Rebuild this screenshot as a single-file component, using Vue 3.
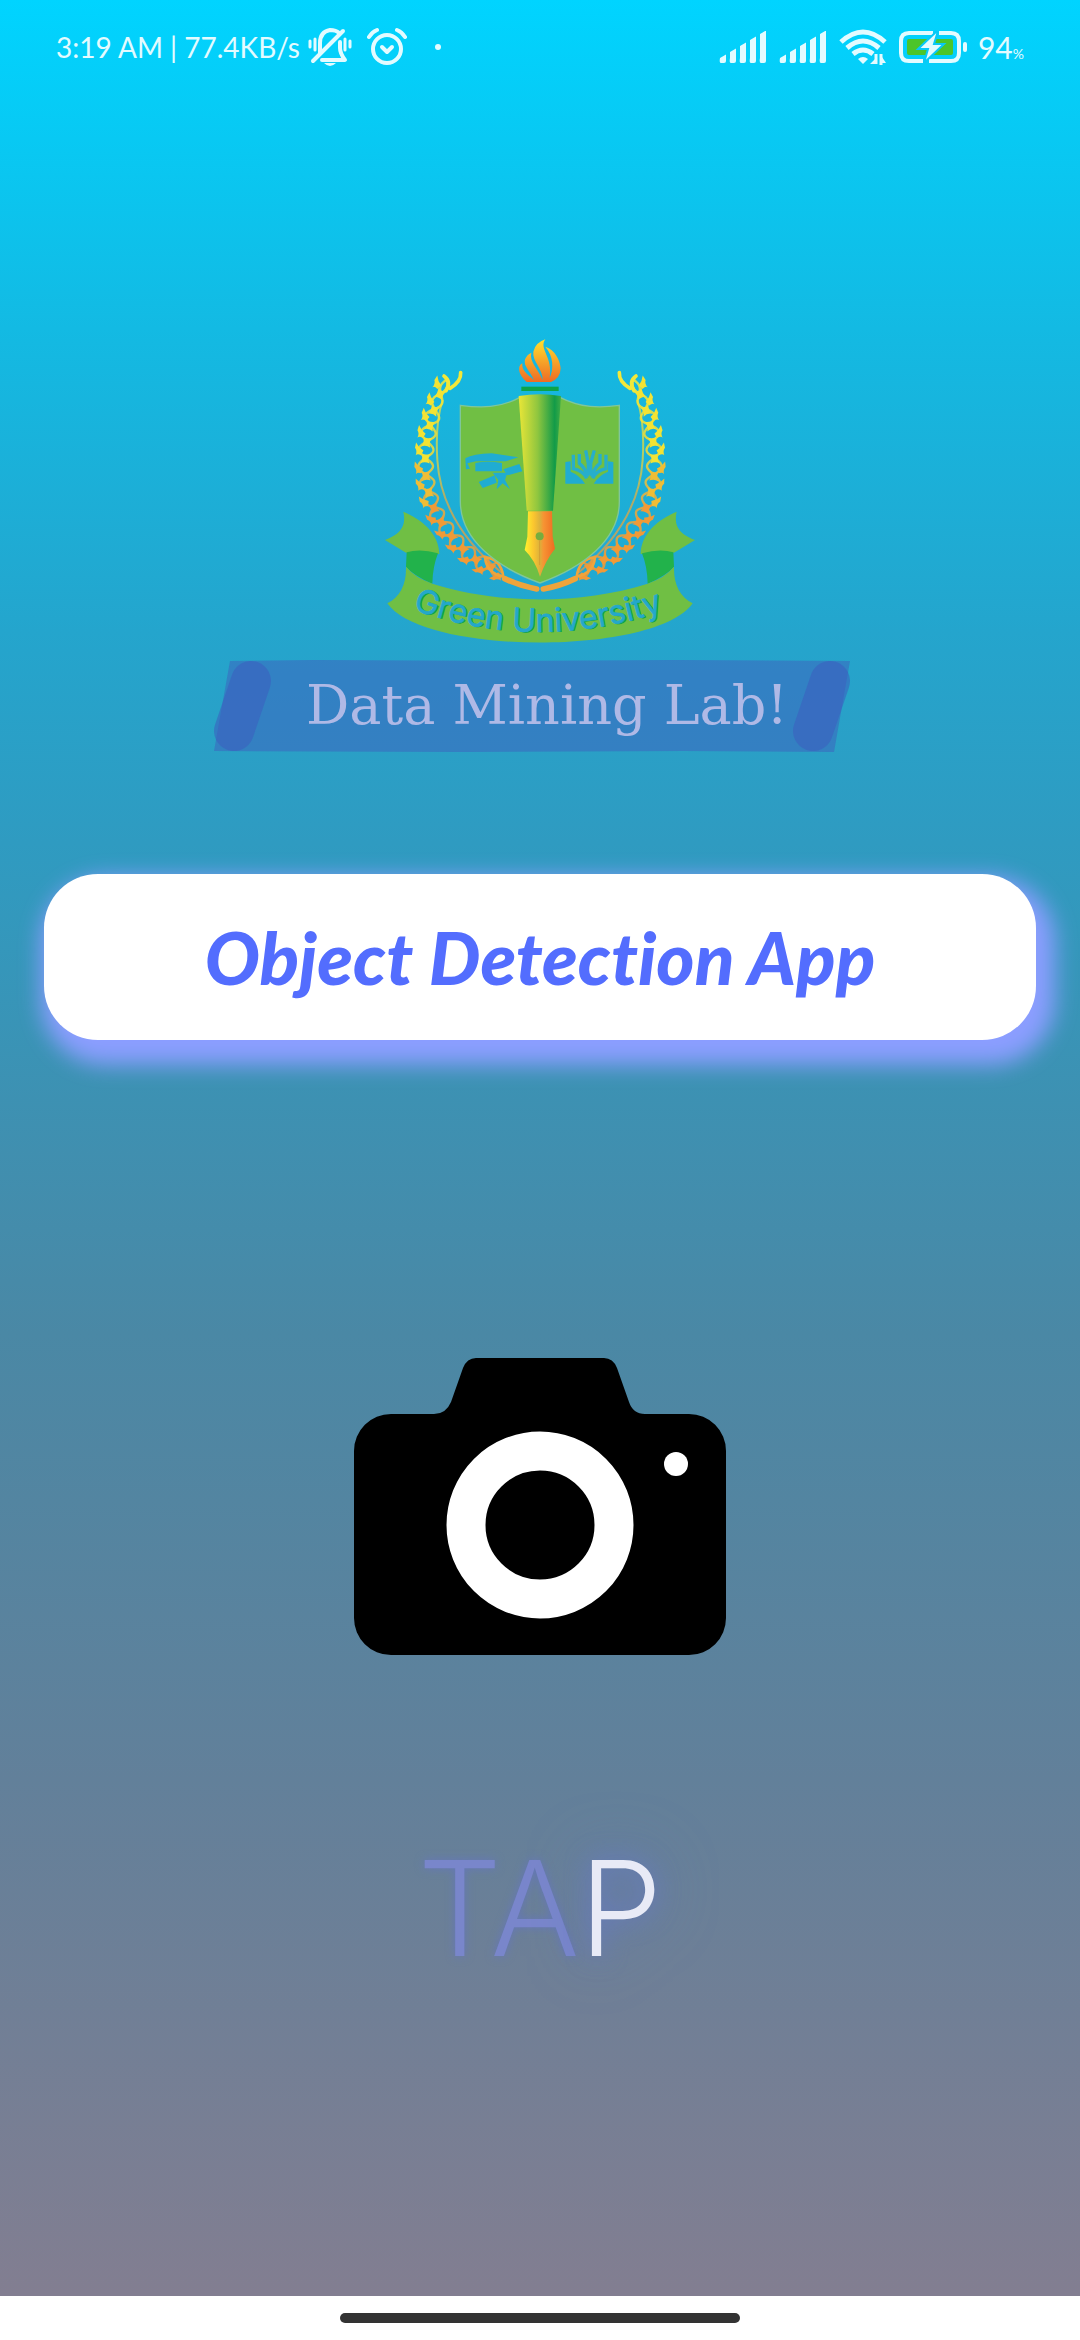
<script setup>
const bez = (p, t) => {
  const u = 1 - t
  return [0, 1].map(i => u * u * u * p[0][i] + 3 * u * u * t * p[1][i] + 3 * u * t * t * p[2][i] + t * t * t * p[3][i])
}
const stem = [
  [[234, 175], [150, 330], [140, 520], [232, 630]],
  [[232, 630], [275, 690], [325, 735], [390, 750]]
]
const points = []
stem.forEach(s => { for (let i = 0; i < 100; i++) points.push(bez(s, i / 100)) })

// Two strands twisted round the stem, with a leaf at each crossing and one at each outer bulge
let run = 0
const strandA = []
const strandB = []
const leaves = []
let last = 0
for (let i = 1; i < points.length - 1; i++) {
  const dx = points[i + 1][0] - points[i - 1][0]
  const dy = points[i + 1][1] - points[i - 1][1]
  const len = Math.hypot(dx, dy)
  run += len / 2
  const nx = -dy / len
  const ny = dx / len
  const w = Math.sin((run / 50) * Math.PI) * Math.min(22, 6 + run / 8)
  strandA.push(`${(points[i][0] + nx * w).toFixed(1)} ${(points[i][1] + ny * w).toFixed(1)}`)
  strandB.push(`${(points[i][0] - nx * w).toFixed(1)} ${(points[i][1] - ny * w).toFixed(1)}`)
  if (Math.floor(run / 25) > last) {
    last = Math.floor(run / 25)
    const angle = (Math.atan2(dy, dx) * 180) / Math.PI
    leaves.push({ x: points[i][0].toFixed(1), y: points[i][1].toFixed(1), angle: angle.toFixed(1), outer: last % 2 === 1 })
  }
}
const braid = `M${strandA.join('L')}M${strandB.join('L')}`
const leafColor = y => (y < 420 ? '#f3e334' : y < 560 ? '#efbd36' : '#f09a37')
const bars = [0, 1, 2, 3, 4]
</script>

<template>
  <div class="screen">
    <header class="status">
      <span class="clock">3:19 AM | 77.4KB/s</span>
      <svg class="bell" width="46" height="42" viewBox="0 0 46 42" fill="none" stroke="#e3fbff" stroke-width="4">
        <path d="M13 27V17C13 9 17 5 23 4C27 4 30 5 32 7" />
        <path d="M6 35L36 5" stroke-linecap="round" />
        <path d="M33 16V22C33 27 35 30 38 34H15" stroke-linejoin="round" stroke-linecap="round" />
        <path d="M17 37H29Q23 43 17 37Z" fill="#e3fbff" stroke="none" />
        <path d="M3 15V21M8 13V24M38 13V24M43 15V21" stroke-width="3" stroke-linecap="round" />
      </svg>
      <svg class="alarm" width="40" height="40" viewBox="0 0 40 40" fill="none" stroke="#e3fbff" stroke-linecap="round">
        <circle cx="20" cy="22" r="14" stroke-width="4" />
        <path d="M15 20L20 25L25 20" stroke-width="4" stroke-linejoin="round" />
        <path d="M2 10Q5 5 10 3M30 3Q35 5 38 10" stroke-width="4" />
      </svg>
      <i class="dot"></i>
      <div class="system">
        <svg v-for="n in 2" :key="n" width="48" height="32" viewBox="0 0 48 32" fill="#e3fbff">
          <path v-for="b in bars" :key="b" :d="`M${b * 10 + 1} ${27 - b * 6}L${b * 10 + 7} ${23.5 - b * 6}V30Q${b * 10 + 7} 32 ${b * 10 + 5} 32H${b * 10 + 2}Q${b * 10} 32 ${b * 10 + 1} 27Z`" />
        </svg>
        <svg class="wifi" width="48" height="36" viewBox="0 0 48 36" fill="none" stroke="#e3fbff" stroke-width="5">
          <path d="M2 13Q24 -7 46 13M8 19Q24 5 40 19M14 25Q24 17 34 25" />
          <path d="M19 30Q24 26 29 30L24 35Z" fill="#e3fbff" stroke="none" />
          <path d="M37 25V35M42 25V36" stroke-width="3" />
          <path d="M38 35H31L38 28ZM41 25V34H47Z" fill="#e3fbff" stroke="none" />
        </svg>
        <svg width="70" height="32" viewBox="0 0 70 32" fill="none">
          <rect x="8" y="8" width="46" height="16" rx="2" fill="#4cc52a" />
          <path d="M34 2H10Q2 2 2 10V22Q2 30 10 30H24M40 2H52Q60 2 60 10V22Q60 30 52 30H30" stroke="#e3fbff" stroke-width="4" />
          <path d="M38 0L19 18H29L25 32L45 13H35L39 0Z" fill="#e3fbff" stroke="#08c9f7" stroke-width="2" />
          <rect x="64" y="11" width="4" height="10" rx="2" fill="#e3fbff" />
        </svg>
        <span class="charge">94<small>%</small></span>
      </div>
    </header>

    <main class="content">
      <svg class="crest" viewBox="0 0 1020 1020" role="img" aria-label="Green University">
        <defs>
          <linearGradient id="flame" x2="0" y2="1"><stop offset="0" stop-color="#ffe12d" /><stop offset="1" stop-color="#ee6b24" /></linearGradient>
          <linearGradient id="barrel"><stop offset="0" stop-color="#eae637" /><stop offset=".45" stop-color="#8fc63f" /><stop offset=".85" stop-color="#129b48" /><stop offset="1" stop-color="#3fac46" /></linearGradient>
          <linearGradient id="nib"><stop offset="0" stop-color="#fff22d" /><stop offset=".3" stop-color="#fbc52f" /><stop offset=".5" stop-color="#dcb13b" /><stop offset=".62" stop-color="#f79433" /><stop offset="1" stop-color="#ee6b22" /></linearGradient>
          <linearGradient id="wheat" gradientUnits="userSpaceOnUse" x1="0" y1="160" x2="0" y2="780"><stop offset="0" stop-color="#f5ec36" /><stop offset=".4" stop-color="#f3da32" /><stop offset=".62" stop-color="#edaa3a" /><stop offset="1" stop-color="#f29536" /></linearGradient>
          <path id="motto" d="M128 868Q505 1004 900 866" />
          <g id="branch">
            <path :d="braid" fill="none" stroke="url(#wheat)" stroke-width="7" stroke-opacity=".85" />
            <g v-for="(leaf, i) in leaves" :key="i" :transform="`translate(${leaf.x} ${leaf.y}) rotate(${leaf.angle})`">
              <path v-if="leaf.outer" d="M-20 32Q-6 24 2 8L16 14Q12 26 18 30Q4 26 -4 34Z" :fill="leafColor(leaf.y)" />
              <path v-else d="M-18 14Q-6 8 -14 -14Q0 -4 16 -12Q8 2 16 16Q2 6 -18 14Z" :fill="leafColor(leaf.y)" />
            </g>
            <path d="M272 158Q274 185 240 205M222 168Q245 185 228 212" fill="none" stroke="#f3e838" stroke-width="11" stroke-linecap="round" />
            <path d="M218 240Q195 310 202 420Q214 610 395 758" fill="none" stroke="url(#wheat)" stroke-width="6" stroke-opacity=".7" />
            <path d="M345 712Q392 715 400 770Q350 760 345 712Z" fill="none" stroke="#efa43b" stroke-width="8" />
            <path d="M404 776Q450 798 500 807" fill="none" stroke="#efa43b" stroke-width="17" stroke-linecap="round" />
          </g>
        </defs>
        <use href="#branch" />
        <use href="#branch" transform="translate(1020 0) scale(-1 1)" />
        <path d="M271 256C335 265 390 264 450 232H570C632 264 690 264 748 256V545C748 660 640 742 510 789C380 742 272 660 271 545Z" fill="#70bf44" stroke="#7fc79a" stroke-width="4" />
        <path d="M446 228Q510 218 573 228L549 572H470Z" fill="url(#barrel)" />
        <path d="M474 574H546L548 650L555 686Q526 722 510 770Q495 720 464 690L472 650Z" fill="url(#nib)" />
        <circle cx="509" cy="649" r="12" fill="#76ad3e" />
        <path d="M509 661V735" stroke="#d59d32" stroke-width="3" />
        <rect x="454" y="200" width="112" height="13" fill="#0ca44b" />
        <path d="M470 186C440 160 445 135 457 130C455 150 468 160 492 180C478 150 460 140 465 118Q470 105 484 98C477 125 504 145 518 180C519 145 486 125 490 95Q496 68 526 58C505 87 550 110 539 174C552 145 550 108 526 80C555 90 570 120 572 145Q571 175 543 186Z" fill="url(#flame)" />
        <g fill="#20acd2">
          <path d="M286 415Q310 402 365 400L445 412L407 424H318L292 430L300 446L288 448Z" />
          <path d="M316 429Q352 421 396 429V454H316ZM400 448L448 432L457 454L412 466ZM326 486L374 466L380 488L338 504ZM368 458H412L405 480L420 508L398 490L380 508L385 480Z" />
          <path d="M586 426L602 424V455Q628 465 645 491H586ZM730 426L714 424V455Q688 465 671 491H730Z" />
        </g>
        <path d="M610 404V446Q640 453 650 475M628 402V430Q645 443 653 470M647 391L655 430V466M708 404V446Q678 453 668 475M690 402V430Q673 443 665 470M673 391L662 430V466" fill="none" stroke="#27aecb" stroke-width="10" />
        <g id="ribbon-end">
          <path d="M100 575C155 598 207 640 208 702L108 698L45 660C90 642 110 620 100 575Z" fill="#70bf44" />
          <path d="M110 697Q150 684 204 700Q188 740 187 791Q130 766 108 740Z" fill="#22b24b" />
        </g>
        <use href="#ribbon-end" transform="translate(1020 0) scale(-1 1)" />
        <path d="M108 740Q135 773 187 791C390 854 630 854 833 791Q885 773 912 740Q910 820 968 850C860 1007 160 1007 52 850Q110 820 108 740Z" fill="#70bf44" />
        <text class="motto-shade" transform="translate(4 2)"><textPath href="#motto">Green University</textPath></text>
        <text class="motto"><textPath href="#motto">Green University</textPath></text>
      </svg>

      <div class="ribbon">
        <svg class="ribbon-shape" viewBox="0 0 636 92" preserveAspectRatio="none" aria-hidden="true">
          <path d="M16 1L100 0L300 1L460 0L636 1L620 92L470 91L250 92L0 91Z" fill="#3d60be" fill-opacity=".5" />
          <path d="M37 21L20 71M616 21L599 71" stroke="#3c5cc0" stroke-opacity=".55" stroke-width="40" stroke-linecap="round" />
        </svg>
        <span class="ribbon-text">Data Mining Lab!</span>
      </div>

      <h1 class="card">Object Detection App</h1>

      <button class="camera" type="button" aria-label="Open camera">
        <svg viewBox="0 0 372 298">
          <path d="M36 56H80Q92 56 97 44L109 10Q113 0 122 0H250Q259 0 263 10L275 44Q279 56 291 56H335A37 37 0 0 1 372 93V260A37 37 0 0 1 335 297H37A37 37 0 0 1 0 260V93A37 37 0 0 1 37 56Z" />
          <circle cx="186" cy="167" r="74" stroke="#fff" stroke-width="39" />
          <circle cx="322" cy="106" r="12" fill="#fff" />
        </svg>
      </button>

      <p class="tap">TA<b>P</b></p>
    </main>

    <footer class="nav"><i></i></footer>
  </div>
</template>

<style>
body {
  margin: 0;
}
</style>

<style scoped>
.screen {
  display: flex;
  flex-direction: column;
  min-height: 100vh;
  background: linear-gradient(#00d4ff 0%, #13bae3 14%, #24a5cd 27%, #2f9bc1 36%, #4a88a5 57%, #62809a 76%, #827e91 98%);
}
.status {
  display: flex;
  align-items: center;
  height: 94px;
  padding: 0 56px;
  color: #e3fbff;
  font-family: Lato, sans-serif;
  font-size: 28px;
}
.clock {
  white-space: nowrap;
}
.bell {
  margin-left: 7px;
}
.alarm {
  margin-left: 14px;
}
.dot {
  width: 6px;
  height: 6px;
  margin-left: 28px;
  border-radius: 50%;
  background: #e3fbff;
}
.system {
  display: flex;
  align-items: center;
  gap: 12px;
  margin-left: auto;
}
.charge {
  margin-left: -3px;
  font-size: 30px;
}
.charge small {
  font-size: 14px;
}
.content {
  display: flex;
  flex: 1;
  flex-direction: column;
  align-items: center;
}
.crest {
  width: 340px;
  height: 340px;
  margin-top: 226px;
}
.motto,
.motto-shade {
  font-family: Inter, sans-serif;
  font-size: 97px;
}
.motto {
  fill: #24a8ca;
  stroke: #24a8ca;
  stroke-width: 2px;
}
.motto-shade {
  fill: #0ba24a;
}
.ribbon {
  display: grid;
  width: 636px;
  height: 92px;
  margin-right: 16px;
}
.ribbon > * {
  grid-area: 1 / 1;
}
.ribbon-shape {
  width: 100%;
  height: 100%;
}
.ribbon-text {
  z-index: 1;
  align-self: center;
  padding-left: 30px;
  color: #afb9e6;
  font: 54px/64px "DejaVu Serif", serif;
  text-align: center;
  white-space: nowrap;
}
.card {
  display: flex;
  align-items: center;
  justify-content: center;
  align-self: stretch;
  height: 166px;
  margin: 122px 44px 0;
  border-radius: 54px;
  background: #fff;
  box-shadow: 8px 14px 22px 11px #8c9eff;
  color: #536dfe;
  font: italic 900 73px/84px Lato, sans-serif;
  font-variant-ligatures: none;
  white-space: nowrap;
}
.camera {
  width: 372px;
  height: 298px;
  margin-top: 318px;
  padding: 0;
  border: 0;
  background: none;
}
.camera svg {
  display: block;
  width: 100%;
}
.tap {
  margin: 172px 0 0;
  color: #7986cb;
  font: 300 132px/160px Inter, sans-serif;
  text-shadow: 0 0 10px #6577bb;
}
.tap b {
  color: #e8eaf6;
  font-weight: 300;
  text-shadow: 0 0 24px #687bc4, 0 0 60px #6078b8;
}
.nav {
  display: flex;
  align-items: center;
  justify-content: center;
  height: 44px;
  background: #fff;
}
.nav i {
  width: 37%;
  height: 10px;
  border-radius: 5px;
  background: #333;
}
</style>
